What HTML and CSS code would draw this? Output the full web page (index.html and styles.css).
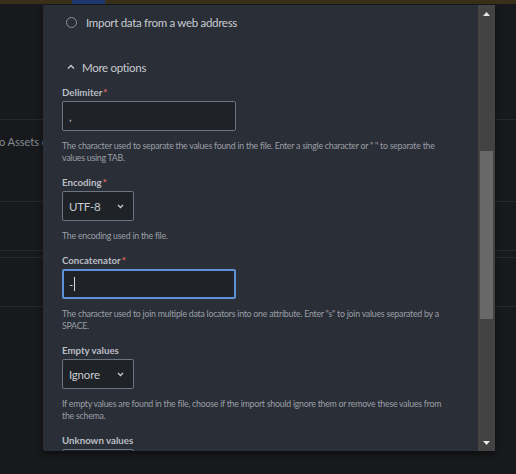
FILE: index.html
```html
<!DOCTYPE html>
<html>
<head>
<meta charset="utf-8">
<link rel="stylesheet" href="styles.css">
</head>
<body>
<div class="page">
  <div class="topbar"><span class="topbar-active"></span></div>
  <div class="bg-list">
    <div class="bg-row row-a"></div>
    <div class="bg-row row-b"><span class="bg-text">to Assets catalog</span></div>
    <div class="bg-row row-c"></div>
    <div class="bg-row row-d"></div>
    <div class="bg-row row-e"></div>
  </div>

  <div class="modal">
    <div class="modal-body">
      <div class="radio-row"><span class="radio"></span><span>Import data from a web address</span></div>

      <div class="toggle">
        <svg class="chev-up" width="8" height="6" viewBox="0 0 8 6"><path d="M1 4.5 L4 1.5 L7 4.5" fill="none" stroke="#c8ccd2" stroke-width="1.4"/></svg>
        <span>More options</span>
      </div>

      <div class="field">
        <div class="label">Delimiter<span class="req">*</span></div>
        <div class="input">,</div>
        <p class="help">The character used to separate the values found in the file. Enter a single character or " " to separate the values using TAB.</p>
      </div>

      <div class="field">
        <div class="label">Encoding<span class="req">*</span></div>
        <div class="select"><span>UTF-8</span><svg width="7" height="5" viewBox="0 0 7 5"><path d="M1 1 L3.5 3.5 L6 1" fill="none" stroke="#c8ccd2" stroke-width="1.3"/></svg></div>
        <p class="help">The encoding used in the file.</p>
      </div>

      <div class="field">
        <div class="label">Concatenator<span class="req">*</span></div>
        <div class="input focused"><span>-</span><span class="caret"></span></div>
        <p class="help">The character used to join multiple data locators into one attribute. Enter "s" to join values separated by a SPACE.</p>
      </div>

      <div class="field">
        <div class="label">Empty values</div>
        <div class="select"><span>Ignore</span><svg width="7" height="5" viewBox="0 0 7 5"><path d="M1 1 L3.5 3.5 L6 1" fill="none" stroke="#c8ccd2" stroke-width="1.3"/></svg></div>
        <p class="help">If empty values are found in the file, choose if the import should ignore them or remove these values from the&nbsp;schema.</p>
      </div>

      <div class="field">
        <div class="label">Unknown values</div>
        <div class="select"><span>Ignore</span></div>
      </div>
    </div>

    <div class="scrollbar">
      <div class="sb-btn"><svg width="7" height="4" viewBox="0 0 7 4"><path d="M0 4 L3.5 0 L7 4 Z" fill="#e8e8e8"/></svg></div>
      <div class="sb-track">
        <div class="sb-thumb"></div>
      </div>
      <div class="sb-btn"><svg width="7" height="4" viewBox="0 0 7 4"><path d="M0 0 L7 0 L3.5 4 Z" fill="#e8e8e8"/></svg></div>
    </div>
  </div>
</div>
</body>
</html>
```

FILE: styles.css
```css
* { box-sizing: border-box; }

html, body {
  margin: 0;
  padding: 0;
  background: #17191c;
  width: 516px;
  height: 474px;
  overflow: hidden;
}

body {
  font-family: Lato, "Open Sans", sans-serif;
  color: #c8ccd2;
}

.page {
  position: relative;
  width: 516px;
  height: 474px;
}

.topbar {
  height: 4px;
  background: #3a3019;
  display: flex;
}

.topbar-active {
  margin-left: 72px;
  width: 33px;
  background: #1f3a70;
}

.bg-list {
  display: flex;
  flex-direction: column;
}

.bg-row {
  border-bottom: 1px solid #26292e;
}

.row-a { height: 116px; }
.row-b { height: 82px; padding-top: 15px; }
.row-c { height: 49px; }
.row-d { height: 7px; }
.row-e { height: 49px; }

.bg-text {
  display: block;
  margin-left: -5px;
  font-size: 11px;
  color: #868b93;
  white-space: nowrap;
}

.modal {
  position: absolute;
  left: 43px;
  top: 5px;
  width: 452px;
  height: 446px;
  background: #2a2e36;
  display: flex;
  box-shadow: 0 3px 6px rgba(0, 0, 0, 0.45);
  border-radius: 2px;
}

.modal-body {
  flex: 1;
  overflow: hidden;
  padding: 9px 25px 0 19px;
}

.radio-row {
  display: flex;
  align-items: center;
  height: 16px;
  font-size: 11.5px;
  letter-spacing: -0.3px;
  padding-left: 4px;
}

.radio {
  width: 11px;
  height: 11px;
  border: 1px solid #8c929b;
  border-radius: 50%;
  margin-right: 9px;
}

.toggle {
  margin-top: 29px;
  height: 16px;
  display: flex;
  align-items: center;
  font-size: 11.5px;
  letter-spacing: -0.3px;
  padding-left: 5px;
}

.chev-up {
  margin-right: 7px;
}

.field {
  margin-top: 10px;
}

.field + .field {
  margin-top: 11px;
}

.label {
  height: 14px;
  line-height: 14px;
  font-size: 9.7px;
  font-weight: 700;
  color: #b9bec5;
  margin-bottom: 2px;
}

.req {
  color: #e36a6a;
  margin-left: 1px;
}

.input {
  width: 174px;
  height: 30px;
  border: 1px solid #6b7480;
  border-radius: 2px;
  background: #1f2227;
  padding-left: 6px;
  font-size: 11.5px;
  display: flex;
  align-items: center;
}

.input.focused {
  border: 2px solid #5e90d8;
  padding-left: 5px;
}

.caret {
  display: inline-block;
  width: 1px;
  height: 14px;
  background: #d6d9de;
  margin-left: 1px;
}

.select {
  width: 72px;
  height: 30px;
  border: 1px solid #6b7480;
  border-radius: 2px;
  background: #1f2227;
  padding: 0 9px 0 6px;
  font-size: 11.5px;
  letter-spacing: -0.2px;
  display: flex;
  align-items: center;
  justify-content: space-between;
}

.help {
  margin: 9px 0 0;
  font-size: 8.8px;
  letter-spacing: -0.25px;
  line-height: 12px;
  color: #9a9fa7;
}

.scrollbar {
  width: 17px;
  background: #434343;
  display: flex;
  flex-direction: column;
}

.sb-btn {
  height: 17px;
  display: flex;
  align-items: center;
  justify-content: center;
}

.sb-track {
  flex: 1;
  padding: 129px 2px 0;
}

.sb-thumb {
  height: 168px;
  background: #686868;
}
```
